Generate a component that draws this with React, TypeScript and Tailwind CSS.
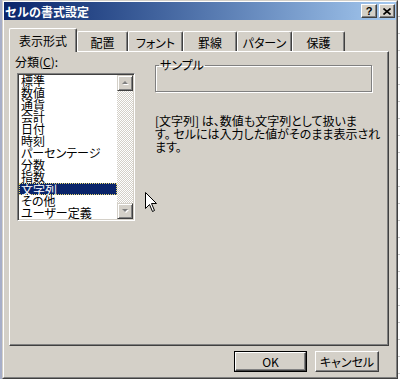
import React from "react";

const categories = [
  "標準",
  "数値",
  "通貨",
  "会計",
  "日付",
  "時刻",
  "パーセンテージ",
  "分数",
  "指数",
  "文字列",
  "その他",
  "ユーザー定義",
];

const tabs = [
  { label: "配置", w: "w-[51px]" },
  { label: "フォント", w: "w-[55px]" },
  { label: "罫線", w: "w-[54px]" },
  { label: "パターン", w: "w-[55px]" },
  { label: "保護", w: "w-[53px]" },
];

function TitleButton({ children }: { children: React.ReactNode }) {
  return (
    <div className="w-[16px] h-[14px] flex items-center justify-center bg-[#d4d0c8] border border-t-white border-l-white border-r-[#404040] border-b-[#404040] shadow-[inset_-1px_-1px_#808080]">
      {children}
    </div>
  );
}

function ScrollArrow({ up }: { up: boolean }) {
  return (
    <div className="w-[16px] h-[16px] flex items-center justify-center bg-[#d4d0c8] border border-t-[#d4d0c8] border-l-[#d4d0c8] border-r-[#404040] border-b-[#404040] shadow-[inset_1px_1px_white,inset_-1px_-1px_#808080]">
      <svg width="9" height="6" viewBox="0 0 9 6">
        {up ? (
          <>
            <path d="M2 5 L5 2 L8 5 Z" fill="#ffffff" />
            <path d="M1 4 L4 1 L7 4 Z" fill="#808080" />
          </>
        ) : (
          <>
            <path d="M2 2 L8 2 L5 5 Z" fill="#ffffff" />
            <path d="M1 1 L7 1 L4 4 Z" fill="#808080" />
          </>
        )}
      </svg>
    </div>
  );
}

function Button({ label, isDefault }: { label: string; isDefault?: boolean }) {
  const inner = (
    <div className="flex-1 flex items-center justify-center border border-t-white border-l-white border-r-[#404040] border-b-[#404040] shadow-[inset_-1px_-1px_#808080] text-[12px] leading-[12px] text-black [font-feature-settings:'palt']">
      {label}
    </div>
  );
  if (isDefault) {
    return <div className="w-[73px] h-[21px] flex border border-black">{inner}</div>;
  }
  return <div className="w-[64px] h-[21px] flex">{inner}</div>;
}

export default function App() {
  return (
    <div className="relative w-[400px] h-[379px] flex pl-[2px] bg-[#a7aec8] overflow-hidden font-['Noto_Sans_CJK_JP','Noto_Sans',sans-serif] text-black select-none">
      {/* dialog window */}
      <div className="w-[396px] h-[379px] flex border border-t-[#d4d0c8] border-l-[#d4d0c8] border-r-[#404040] border-b-[#404040] bg-[#d4d0c8]">
        <div className="flex-1 flex flex-col border border-t-white border-l-white border-r-[#808080] border-b-[#808080]">
          {/* title bar */}
          <div className="h-[18px] flex items-center justify-between pl-[1px] pr-[1px] bg-linear-to-r from-[#0a246a] to-[#a6caf0]">
            <span className="text-white font-bold text-[12px] leading-[12px] mt-[2px]">
              セルの書式設定
            </span>
            <div className="flex gap-[2px]">
              <TitleButton>
                <span className="text-[11px] leading-[11px] font-bold font-['Liberation_Sans',sans-serif]">?</span>
              </TitleButton>
              <TitleButton>
                <svg width="8" height="7" viewBox="0 0 8 7">
                  <path d="M0.5 0.5 L7.5 6.5 M7.5 0.5 L0.5 6.5" stroke="#000" strokeWidth="1.6" />
                </svg>
              </TitleButton>
            </div>
          </div>

          {/* tabs */}
          <div className="mt-[8px] ml-[5px] flex items-end h-[23px]">
            <div className="relative z-10 -mb-[1px] w-[68px] h-[24px] flex items-center justify-center bg-[#d4d0c8] border-l border-t border-r border-l-white border-t-white border-r-[#404040] rounded-t-[2px] shadow-[inset_-1px_0_#808080] text-[12px] leading-[12px] pt-[1px]">
              表示形式
            </div>
            {tabs.map((t) => (
              <div
                key={t.label}
                className={`${t.w} h-[20px] flex items-center justify-center border-l border-t border-r border-l-white border-t-white border-r-[#404040] rounded-t-[2px] shadow-[inset_-1px_0_#808080] text-[12px] leading-[12px] pt-[2px] [font-feature-settings:'palt']`}
              >
                {t.label}
              </div>
            ))}
          </div>

          {/* panel */}
          <div className="ml-[5px] w-[380px] h-[295px] flex border border-t-white border-l-white border-r-[#404040] border-b-[#404040] shadow-[inset_-1px_-1px_#808080]">
            {/* left column */}
            <div className="flex flex-col pl-[5px] pt-[4px]">
              <div className="text-[12px] leading-[12px] h-[12px] [font-feature-settings:'palt']">
                分類(<span className="underline underline-offset-1">C</span>):
              </div>
              <div className="mt-[5px] ml-[2px] w-[118px] h-[148px] flex border border-t-[#808080] border-l-[#808080] border-r-white border-b-white bg-white shadow-[inset_1px_1px_#404040,inset_-1px_-1px_#d4d0c8] p-[1px]">
                <div className="flex-1 flex flex-col">
                  {categories.map((c) =>
                    c === "文字列" ? (
                      <div
                        key={c}
                        className="h-[12px] leading-[11px] pl-[1px] text-[12px] text-white bg-[#0a246a] border border-dotted border-[#e8d870] [font-feature-settings:'palt']"
                      >
                        {c}
                      </div>
                    ) : (
                      <div key={c} className="h-[12px] leading-[12px] pl-[2px] text-[12px] [font-feature-settings:'palt']">
                        {c}
                      </div>
                    )
                  )}
                </div>
                <div className="w-[16px] flex flex-col justify-between [background-image:repeating-conic-gradient(#d4d0c8_0_25%,#ffffff_0_50%)] [background-size:2px_2px]">
                  <ScrollArrow up />
                  <ScrollArrow up={false} />
                </div>
              </div>
            </div>

            {/* right column */}
            <div className="ml-[20px] pt-[7px] flex flex-col">
              <fieldset className="w-[217px] h-[33px] border border-[#808080] shadow-[inset_1px_1px_white,1px_1px_white] pl-[3px]">
                <legend className="text-[12px] leading-[12px] px-[1px] [font-feature-settings:'palt']">サンプル</legend>
              </fieldset>
              <p className="mt-[22px] text-[12px] leading-[13px] [font-feature-settings:'palt']">
                [文字列] は、数値も文字列として扱いま
                <br />
                す。 セルには入力した値がそのまま表示され
                <br />
                ます。
              </p>
            </div>
          </div>

          {/* buttons */}
          <div className="mt-[5px] pl-[230px] flex gap-[8px]">
            <Button label="OK" isDefault />
            <Button label="キャンセル" />
          </div>
        </div>
      </div>

      {/* background sheet to the right */}
      <div className="flex-1 bg-white [background-image:repeating-linear-gradient(to_bottom,#ffffff_0_16px,#c8c8c8_16px_17px)]" />

      {/* mouse pointer */}
      <svg className="absolute left-[145px] top-[192px]" width="13" height="21" viewBox="0 0 13 21">
        <path
          d="M0.5 0.5 L0.5 16.5 L4.5 12.5 L7.5 19.5 L9.5 18.5 L6.5 11.5 L11.5 11.5 Z"
          fill="#ffffff"
          stroke="#000000"
          strokeWidth="1"
        />
      </svg>
    </div>
  );
}
